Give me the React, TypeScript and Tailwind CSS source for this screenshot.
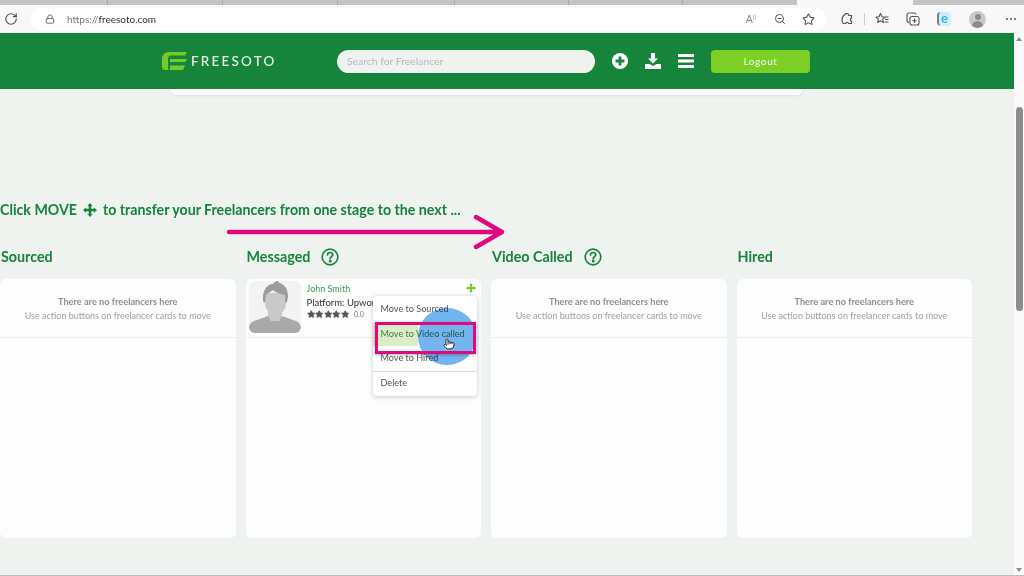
import type { JSX } from "react";
import { RotateCw, Lock, Star, ZoomOut, Pointer } from "lucide-react";

const TABS = [108, 115, 115, 117, 114, 114];

function MoveIcon({ size = 14, color = "#16843a" }: { size?: number; color?: string }): JSX.Element {
    return (
        <svg width={size} height={size} viewBox="0 0 16 16" fill={color}>
            <path d="M8 0 11 3.500H9.500v3h3V5L16 8l-3.500 3V9.500h-3v3H11L8 16l-3-3.500h1.500v-3h-3V11L0 8l3.500-3v1.500h3v-3H5z" />
        </svg>
    );
}

function HelpIcon(): JSX.Element {
    return (
        <svg width="18" height="18" viewBox="0 0 18 18" fill="none" stroke="#16843a" strokeWidth="1.7">
            <circle cx="9" cy="9" r="7.8" />
            <path d="M6.5 7c0-1.6 1.1-2.5 2.6-2.5S11.7 5.4 11.7 6.8c0 1.8-2.5 2-2.5 3.9" strokeLinecap="round" />
            <circle cx="9.2" cy="13.2" r="0.6" fill="#16843a" />
        </svg>
    );
}

function Logo(): JSX.Element {
    return (
        <svg width="25" height="18" viewBox="0 0 25 18" fill="#74c92c">
            <path d="M7 0h18l-2 3.5H9C7 3.5 6 5 6 7v7c0 2 .5 4 .5 4H3c-2 0-3-1-3-3V7c0-4 3-7 7-7z" />
            <path d="M8 7h17l-1.500 3H8z" />
            <path d="M8 13.5h15L21 18H8z" />
        </svg>
    );
}

function Avatar(): JSX.Element {
    return (
        <div className="h-[52px] w-[52px] shrink-0 overflow-hidden rounded-md bg-[#f3f3f3]">
            <svg width="52" height="52" viewBox="0 0 52 52">
                <path d="M0 47c0-4 3-7 8-8l11-4h14l11 4c5 1 8 4 8 8 0 3-2 5-5 5H5c-3 0-5-2-5-5z" fill="#a9a9a9" />
                <path d="M19 28h14v7l-3 5h-8l-3-5z" fill="#c8c8c8" />
                <path d="M16 12h21v10c0 7-5 12-10.500 12S16 29 16 22z" fill="#c9c9c9" />
                <path d="M14 20c-1-10 4-17 10-17 1-2 3-3 5-3l1 2c6 1 9 7 9 14l-1 5-2 1v-8c-4-1-9-2-12-5-2 2-6 3-7 5l-1 8z" fill="#9b9b9b" />
            </svg>
        </div>
    );
}

function Heading({ title, help }: { title: string; help?: boolean }): JSX.Element {
    return (
        <div className="flex h-[47px] items-center gap-[11px] pl-[1px] pt-[2px] text-[14.3px] font-bold text-[#16843a]">
            {title}
            {help && <HelpIcon />}
        </div>
    );
}

function EmptyColumn({ title, help }: { title: string; help?: boolean }): JSX.Element {
    return (
        <div className="w-[235.5px]">
            <Heading title={title} help={help} />
            <div className="h-[259px] rounded-md bg-[#fdfdfd]">
                <div className="flex h-[59px] flex-col items-center border-b border-[#e9eeeb] pt-[16px] text-[9px] leading-[14px] text-[#a0a0a0]">
                    <span className="text-[9.2px] font-bold text-[#8f8f8f]">There are no freelancers here</span>
                    <span>Use action buttons on freelancer cards to move</span>
                </div>
            </div>
        </div>
    );
}

function MessagedColumn(): JSX.Element {
    return (
        <div className="relative w-[235.5px]">
            <Heading title="Messaged" help />
            <div className="h-[259px] rounded-md bg-[#fdfdfd]">
                <div className="flex h-[59px] gap-[6px] border-b border-[#e9eeeb] pl-[3px] pt-[2px]">
                    <Avatar />
                    <div className="flex flex-col text-[9px] leading-[12px]">
                        <span className="mt-[2px] text-[#3d9a5c]">John Smith</span>
                        <span className="mt-[2px] text-[9.5px] text-[#333333]">Platform: Upwork</span>
                        <span className="-mt-[1px] flex items-center gap-[5px]">
                            <span className="flex">
                                {[0, 1, 2, 3, 4].map((i) => (
                                    <Star key={i} size={8.5} fill="#555555" stroke="#555555" />
                                ))}
                            </span>
                            <span className="text-[7px] text-[#777777]">0.0</span>
                        </span>
                    </div>
                </div>
            </div>
            <div className="absolute right-[5px] top-[51px]">
                <MoveIcon size={10} color="#74c92c" />
            </div>
            <div className="absolute left-[127px] top-[64px] w-[104px] rounded bg-white text-[9.1px] leading-[12px] text-[#555555] shadow-[0_1px_5px_rgba(0,0,0,0.22)]">
                <div className="px-[8px] py-[7px]">Move to Sourced</div>
                <div className="bg-[linear-gradient(to_right,#dcecc6_43%,white_43%)] px-[8px] py-[6px] text-[#3f7d50]">Move to Video called</div>
                <div className="border-b border-[#dddddd] px-[8px] pb-[7px] pt-[6px]">Move to Hired</div>
                <div className="px-[8px] pb-[7px] pt-[5px]">Delete</div>
            </div>
            <div className="absolute left-[172px] top-[76px] h-[57px] w-[58px] rounded-full bg-[#74b5f0] mix-blend-multiply" />
            <div className="absolute left-[129px] top-[90px] h-[32px] w-[101px] border-[3px] border-[#e0087f] shadow-[0_1px_3px_rgba(0,0,0,0.3)]" />
            <Pointer className="absolute left-[197px] top-[106px]" size={12} fill="white" stroke="#333333" />
        </div>
    );
}

function BrowserIcons(): JSX.Element {
    return (
        <>
            <svg className="ml-[14px]" width="14" height="14" viewBox="0 0 14 14" fill="none" stroke="#555555" strokeWidth="1.2">
                <path d="M5 2.5C5.500 1 8 1 8.500 2.500l.3 1h2.700v2.700c-1.500.2-1.500 2.600 0 3v2.300H8.800c-.4-1.500-2.800-1.500-3.200 0H3.300c-.8-1-1.300-2-1.300-3.500 0-3 1.300-4.500 3-5.500z" />
            </svg>
            <span className="ml-[10px] h-[12px] w-px bg-[#cccccc]" />
            <svg className="ml-[10px]" width="14" height="14" viewBox="0 0 14 14" fill="none" stroke="#555555" strokeWidth="1.1" strokeLinejoin="round">
                <path d="M5.500 1.500 7 4.800l3 .3-2.300 2.100.7 3.300-2.900-1.700-2.900 1.700.7-3.300L1 5.100l3-.3zM10 7.500h3.500M9.500 5h4M9.500 10h4" />
            </svg>
            <svg className="ml-[17px]" width="14" height="14" viewBox="0 0 14 14" fill="none" stroke="#555555" strokeWidth="1.1">
                <path d="M3 10.500c-1 0-2-.5-2-2V3c0-1 1-2 2-2h5c1 0 2 .5 2 1.500" />
                <rect x="4" y="4.500" width="9" height="8.500" rx="2" />
                <path d="M8.500 6.500v4.500M6.300 8.700h4.400" />
            </svg>
            <span className="relative ml-[17px] h-[14px] w-[14px] rounded-sm border-l-2 border-[#6b7f8f] bg-[#d3edf9]">
                <span className="absolute left-[2px] top-[-3px] text-[13px] font-bold leading-[18px] text-[#2fb4e6]">e</span>
            </span>
            <span className="ml-[18px] flex h-[17px] w-[17px] flex-col items-center overflow-hidden rounded-full bg-[#c9c9c9]">
                <span className="mt-[3px] h-[6px] w-[6px] rounded-full bg-[#8a8a8a]" />
                <span className="mt-[1px] h-[7px] w-[11px] rounded-t-full bg-[#8a8a8a]" />
            </span>
            <span className="ml-[20px] flex gap-[2px]">
                <span className="h-[2px] w-[2px] rounded-full bg-[#555555]" />
                <span className="h-[2px] w-[2px] rounded-full bg-[#555555]" />
                <span className="h-[2px] w-[2px] rounded-full bg-[#555555]" />
            </span>
        </>
    );
}

export default function App(): JSX.Element {
    return (
        <div className="flex h-[576px] w-[1024px] flex-col overflow-hidden bg-[#f7f8f7] font-['Lato','Liberation_Sans',sans-serif]">
            <div className="flex h-[5px] shrink-0 bg-[#c4c4c4]">
                {TABS.map((w, i) => (
                    <div key={i} className="h-full border-r border-[#a8a8a8]" style={{ width: w }} />
                ))}
                <div className="w-[114px]" />
                <div className="h-full w-[116px] bg-[#f7f7f7]" />
            </div>
            <div className="flex h-[28px] shrink-0 items-center text-[#555555]">
                <RotateCw className="ml-[4px]" size={14} />
                <div className="ml-[13px] flex h-[23px] w-[795px] items-center rounded-full bg-white pl-[14px] pr-[11px]">
                    <Lock size={10} />
                    <span className="ml-[12px] text-[10px] text-[#777777]">
                        https://<span className="text-[#333333]">freesoto.com</span>
                    </span>
                    <span className="ml-auto flex items-start text-[10.5px] leading-none text-[#888888]">
                        A<span className="text-[6px]">))</span>
                    </span>
                    <ZoomOut className="ml-[18px]" size={12} />
                    <Star className="ml-[16px]" size={13} />
                </div>
                <BrowserIcons />
            </div>
            <div className="flex min-h-0 flex-1">
                <div className="relative w-[1014px] bg-[#eef3f0]">
                    <header className="flex h-[56px] items-center bg-[#16843a] pl-[162px]">
                        <Logo />
                        <span className="ml-[4px] w-[146px] text-[13.5px] font-medium tracking-[2.2px] text-[#e9f5ea]">FREESOTO</span>
                        <div className="flex h-[23px] w-[258px] items-center rounded-full bg-[#eef3f0] pl-[10px] pt-[1px] text-[10.4px] text-[#b8b8b8]">
                            Search for Freelancer
                        </div>
                        <svg className="ml-[17px]" width="16" height="16" viewBox="0 0 16 16">
                            <circle cx="8" cy="8" r="8" fill="white" />
                            <path d="M8 3.500v9M3.500 8h9" stroke="#16843a" strokeWidth="2.8" />
                        </svg>
                        <svg className="ml-[17px]" width="16" height="16" viewBox="0 0 16 16" fill="white">
                            <path d="M6 0h4v5.500h3L8 10.500 3 5.500h3z" />
                            <path d="M0 11h4.500L8 13l3.500-2H16v5H0z" />
                        </svg>
                        <svg className="ml-[17px]" width="16" height="14" viewBox="0 0 16 14" fill="white">
                            <rect width="16" height="3" y="0" rx="0.5" />
                            <rect width="16" height="3" y="5.5" rx="0.5" />
                            <rect width="16" height="3" y="11" rx="0.5" />
                        </svg>
                        <button className="ml-[17px] h-[23px] w-[99px] rounded bg-[#7ccf25] text-[10px] font-medium tracking-[0.6px] text-[#e9f5ea]">
                            Logout
                        </button>
                    </header>
                    <div className="ml-[170px] h-[6px] w-[633px] rounded-b-md bg-white shadow-[0_1px_2px_rgba(0,0,0,0.08)]" />
                    <div className="mt-[105px] flex h-[20px] items-center gap-[6px] text-[14.2px] font-bold text-[#16843a]">
                        Click MOVE
                        <MoveIcon />
                        <span>to transfer your Freelancers from one stage to the next ...</span>
                    </div>
                    <div className="mt-[12px] flex gap-[10px]">
                        <EmptyColumn title="Sourced" />
                        <MessagedColumn />
                        <EmptyColumn title="Video Called" help />
                        <EmptyColumn title="Hired" />
                    </div>
                    <svg className="absolute left-[226px] top-[181px]" width="280" height="36" viewBox="0 0 280 36" fill="none" stroke="#e0087f" strokeWidth="4.5" strokeLinecap="round" strokeLinejoin="round">
                        <path d="M3 18h272M250 3l26 15-26 15" />
                    </svg>
                </div>
                <div className="flex w-[10px] flex-col items-center bg-[#fafafa]">
                    <span className="mt-[4px] h-0 w-0 border-x-[3px] border-b-[4px] border-x-transparent border-b-[#8c8c8c]" />
                    <div className="mt-[66px] h-[204px] w-[7px] rounded-full bg-[#8c8c8c]" />
                    <span className="mb-[3px] mt-auto h-0 w-0 border-x-[3px] border-t-[4px] border-x-transparent border-t-[#8c8c8c]" />
                </div>
            </div>
            <div className="h-px shrink-0 bg-[#bdbdbd]" />
        </div>
    );
}
